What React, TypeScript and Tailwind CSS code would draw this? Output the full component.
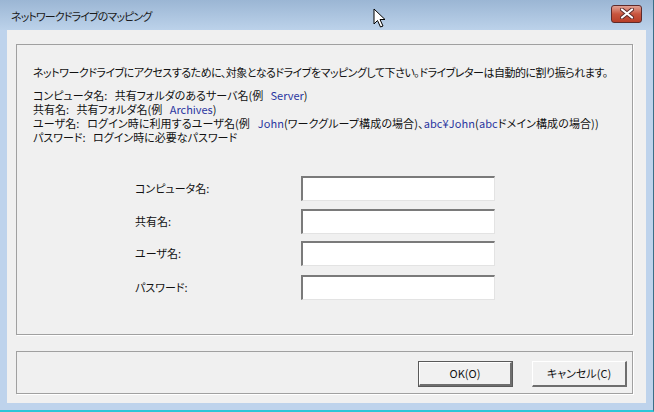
import React from "react";

const jp = "font-['Noto_Sans_CJK_JP','Noto_Sans',sans-serif] [font-feature-settings:'palt']";

function Field({ label, mt }: { label: string; mt: string }) {
  return (
    <div className={`flex items-center ${mt}`}>
      <div className="w-[166px] text-[11px] text-[#111]">{label}</div>
      <div className="w-[194px] h-[25px] bg-white border-t-2 border-l-2 border-b border-r border-t-[#7a7a7a] border-l-[#7a7a7a] border-b-[#e3e3e3] border-r-[#e3e3e3]" />
    </div>
  );
}

function Btn({ label, def }: { label: string; def?: boolean }) {
  return (
    <div className={`w-[95px] h-[26px] ${def ? "border border-[#5a5a5a]" : ""}`}>
      <div className="w-full h-full flex items-center justify-center bg-[#f1f1f1] border-t border-l border-t-white border-l-white border-b-2 border-r-2 border-b-[#6e6e6e] border-r-[#6e6e6e] text-[11px] text-[#111]">
        {label}
      </div>
    </div>
  );
}

export default function App() {
  const blue = "text-[#2a36a0]";
  return (
    <div className={`relative w-[654px] h-[412px] bg-[#bed3ec] flex flex-col border-b-2 border-b-[#2ec6d8] border-r border-r-[#3a6f88] ${jp}`}>
      <div className="h-[30px] shrink-0 flex items-center justify-between pl-[11px] pr-[11px] bg-gradient-to-b from-[#9bb6d4] to-[#bcd2ea]">
        <span className="text-[11px] tracking-[-0.9px] text-[#1a1a1a] pt-[3px]">ネットワークドライブのマッピング</span>
        <div className="w-[31px] h-[18px] rounded-[3px] border border-[#5e2a2a] bg-gradient-to-b from-[#e0a194] via-[#c8553e] to-[#b83e28] flex items-center justify-center mb-[3px]">
          <svg width="14" height="11" viewBox="0 0 14 11">
            <path d="M2 1.5 L12 9.5 M12 1.5 L2 9.5" stroke="#5a2a2a" strokeWidth="4" strokeLinecap="round" />
            <path d="M2 1.5 L12 9.5 M12 1.5 L2 9.5" stroke="#ffffff" strokeWidth="2.2" strokeLinecap="round" />
          </svg>
        </div>
      </div>
      <div className="flex-1 ml-[7px] mr-[7px] mb-[7px] bg-[#f0f0f0] pt-[14px] pl-[9px] pr-[13px] pb-[9px] flex flex-col">
        <div className="h-[291px] border border-[#a0a0a0] shadow-[1px_1px_0_#fff] pl-[16px] pt-[20px] text-[11px] text-[#111]">
          <div className="leading-[14px] whitespace-nowrap tracking-[-0.5px]">ネットワークドライブにアクセスするために、対象となるドライブをマッピングして下さい。ドライブレターは自動的に割り振られます。</div>
          <div className="mt-[9px] leading-[14px] whitespace-nowrap">
            <div>コンピュータ名:&nbsp;&nbsp; 共有フォルダのあるサーバ名(例&nbsp;&nbsp; <span className={blue}>Server</span>)</div>
            <div>共有名:&nbsp;&nbsp; 共有フォルダ名(例&nbsp;&nbsp; <span className={blue}>Archives</span>)</div>
            <div className="tracking-[0.1px]">ユーザ名:&nbsp;&nbsp; ログイン時に利用するユーザ名(例&nbsp;&nbsp; <span className={blue}>John</span>(ワークグループ構成の場合)、<span className={blue}>abc¥John</span>(<span className={blue}>abc</span>ドメイン構成の場合))</div>
            <div>パスワード:&nbsp;&nbsp; ログイン時に必要なパスワード</div>
          </div>
          <div className="pl-[102px] mt-[32px]">
            <Field label="コンピュータ名:" mt="mt-0" />
            <Field label="共有名:" mt="mt-[8px]" />
            <Field label="ユーザ名:" mt="mt-[7px]" />
            <Field label="パスワード:" mt="mt-[9px]" />
          </div>
        </div>
        <div className="mt-[16px] h-[43px] border border-[#a0a0a0] shadow-[1px_1px_0_#fff] flex justify-end items-start pt-[9px] pr-[5px] gap-[19px]">
          <Btn label="OK(O)" def />
          <Btn label="キャンセル(C)" />
        </div>
      </div>
      <svg className="absolute left-[373px] top-[8px]" width="14" height="21" viewBox="0 0 14 21">
        <path d="M1 1 L1 16 L4.5 12.5 L7.5 19 L10 18 L7 11.5 L12 11.5 Z" fill="#fff" stroke="#000" strokeWidth="1" strokeLinejoin="round" />
      </svg>
    </div>
  );
}
